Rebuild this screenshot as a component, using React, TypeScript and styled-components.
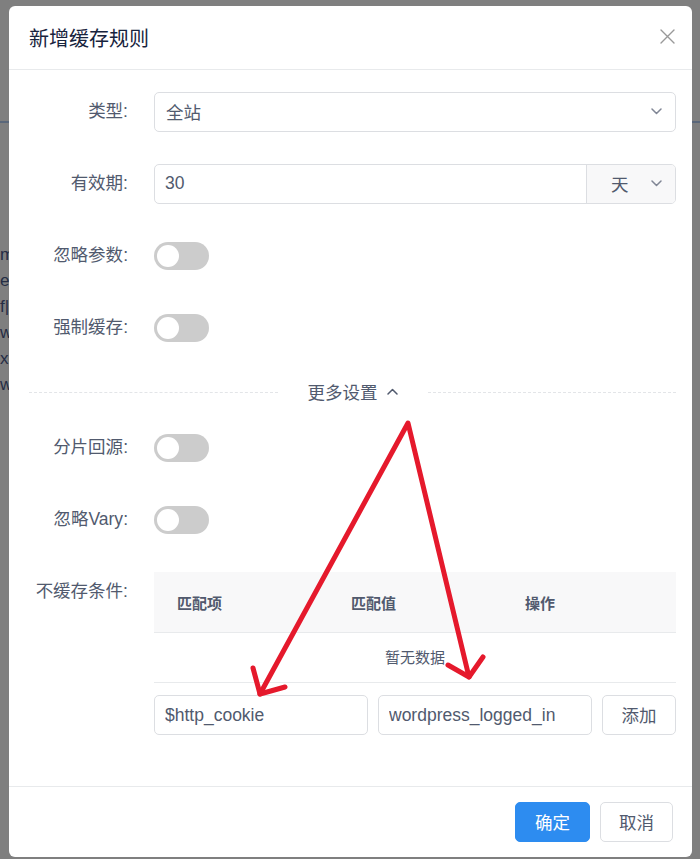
import React from 'react';
import styled, { createGlobalStyle } from 'styled-components';

const GlobalStyle = createGlobalStyle`
  html, body {
    margin: 0;
    padding: 0;
  }
  body {
    font-family: "Liberation Sans", "Noto Sans CJK SC", sans-serif;
    background: #fff;
  }
  * {
    box-sizing: border-box;
  }
`;

const Stage = styled.div`
  position: relative;
  width: 700px;
  height: 859px;
  overflow: hidden;
`;

/* page behind the dialog, only its left edge shows */
const Page = styled.div`
  padding-top: 121px;
`;

const PageRule = styled.div`
  height: 2px;
  background: #b5cff5;
`;

const PageList = styled.ul`
  list-style: none;
  width: 9px;
  overflow: hidden;
  margin: 119px 0 0;
  padding: 0;
`;

const PageItem = styled.li`
  font-size: 17px;
  line-height: 26px;
  color: #4a5a8a;
  white-space: nowrap;
`;

const Mask = styled.div`
  position: absolute;
  inset: 0;
  background: rgba(0, 0, 0, 0.5);
`;

const DialogLayer = styled.div`
  position: absolute;
  inset: 0;
  padding: 6px 8px 2px 9px;
  display: flex;
`;

const Modal = styled.div`
  width: 683px;
  height: 851px;
  background: #fff;
  border-radius: 6px;
  display: flex;
  flex-direction: column;
`;

const Header = styled.div`
  height: 64px;
  flex-shrink: 0;
  padding: 0 17px 0 20px;
  display: flex;
  align-items: center;
  justify-content: space-between;
  border-bottom: 1px solid #e8eaec;
`;

const Title = styled.div`
  font-size: 20px;
  color: #17233d;
`;

const CloseButton = styled.div`
  width: 15px;
  height: 15px;
  display: flex;
  margin-top: -2px;
`;

const Body = styled.div`
  flex: 1;
  padding: 22px 16px 0 20px;
`;

const FormItem = styled.div`
  display: flex;
  align-items: flex-start;
  margin-bottom: 32px;
`;

const Label = styled.div`
  width: 125px;
  flex-shrink: 0;
  padding-right: 26px;
  text-align: right;
  font-size: 17.5px;
  line-height: 38px;
  padding-bottom: 2px;
  color: #515a6e;
`;

const Control = styled.div<{ $inline?: boolean }>`
  flex: 1;
  min-width: 0;
  min-height: 40px;
  display: ${(p) => (p.$inline ? 'flex' : 'block')};
  align-items: center;
`;

const Select = styled.div`
  height: 40px;
  border: 1px solid #dcdee2;
  border-radius: 5px;
  padding: 0 13px 2px 11px;
  display: flex;
  align-items: center;
  justify-content: space-between;
  font-size: 17.5px;
  color: #515a6e;
`;

const InputGroup = styled.div`
  height: 40px;
  border: 1px solid #dcdee2;
  border-radius: 5px;
  display: flex;
  overflow: hidden;
`;

const GroupValue = styled.div`
  flex: 1;
  padding: 0 10px 1px;
  display: flex;
  align-items: center;
  font-size: 17.5px;
  color: #515a6e;
`;

const GroupSuffix = styled.div`
  width: 89px;
  background: #f8f8f9;
  border-left: 1px solid #dcdee2;
  padding: 0 13px 2px 24px;
  display: flex;
  align-items: center;
  justify-content: space-between;
  font-size: 17.5px;
  color: #515a6e;
`;

const Switch = styled.div<{ $on?: boolean }>`
  width: 55px;
  height: 28px;
  border-radius: 14px;
  background: ${(p) => (p.$on ? '#2d8cf0' : '#ccc')};
  padding: 0 3px;
  display: flex;
  align-items: center;
  justify-content: ${(p) => (p.$on ? 'flex-end' : 'flex-start')};
`;

const Knob = styled.div`
  width: 22px;
  height: 22px;
  border-radius: 50%;
  background: #fff;
`;

const Divider = styled.div`
  height: 24px;
  margin: 0 0 24px;
  display: flex;
  align-items: center;
`;

const DividerLine = styled.div`
  flex: 1;
  border-top: 1px dashed #e3e5e8;
`;

const DividerText = styled.div`
  padding: 0 30px 2px;
  display: flex;
  align-items: center;
  gap: 9px;
  font-size: 17.5px;
  color: #515a6e;
`;

const Table = styled.div`
  display: grid;
  grid-template-columns: repeat(3, 1fr);
`;

const HeadCell = styled.div`
  height: 61px;
  padding-left: 23px;
  display: flex;
  align-items: center;
  background: #f8f8f9;
  border-bottom: 1px solid #e8eaec;
  font-size: 15px;
  font-weight: bold;
  color: #515a6e;
`;

const EmptyRow = styled.div`
  grid-column: 1 / -1;
  height: 50px;
  padding-bottom: 2px;
  display: flex;
  align-items: center;
  justify-content: center;
  border-bottom: 1px solid #e8eaec;
  font-size: 15px;
  color: #515a6e;
`;

const AddRow = styled.div`
  margin-top: 12px;
  display: flex;
  gap: 10px;
`;

const TextInput = styled.input`
  width: 214px;
  height: 40px;
  border: 1px solid #dcdee2;
  border-radius: 5px;
  padding: 0 10px;
  font: inherit;
  font-size: 17.5px;
  color: #515a6e;
  background: #fff;
  outline: none;
`;

const Button = styled.button<{ $primary?: boolean; $width?: number }>`
  width: ${(p) => p.$width ?? 74}px;
  height: 40px;
  border-radius: 5px;
  border: 1px solid ${(p) => (p.$primary ? '#2d8cf0' : '#dcdee2')};
  background: ${(p) => (p.$primary ? '#2d8cf0' : '#fff')};
  color: ${(p) => (p.$primary ? '#fff' : '#515a6e')};
  font: inherit;
  font-size: 17.5px;
  padding: 0 0 2px;
  cursor: pointer;
`;

const Footer = styled.div`
  flex-shrink: 0;
  border-top: 1px solid #e8eaec;
  padding: 15px 19px;
  display: flex;
  justify-content: flex-end;
  gap: 10px;
`;

const Annotation = styled.svg`
  position: absolute;
  left: 0;
  top: 0;
  pointer-events: none;
`;

const ChevronDown = () => (
  <svg width="11" height="7" viewBox="0 0 11 7">
    <path d="M1 1 L5.5 5.5 L10 1" fill="none" stroke="#808695" strokeWidth="1.5" strokeLinecap="round" strokeLinejoin="round" />
  </svg>
);

const ChevronUp = () => (
  <svg width="11" height="7" viewBox="0 0 11 7">
    <path d="M1 6 L5.5 1.5 L10 6" fill="none" stroke="#515a6e" strokeWidth="1.5" strokeLinecap="round" strokeLinejoin="round" />
  </svg>
);

const CloseIcon = () => (
  <svg width="15" height="15" viewBox="0 0 15 15">
    <path d="M1 1 L14 14 M14 1 L1 14" stroke="#999" strokeWidth="1.4" strokeLinecap="round" />
  </svg>
);

const ToggleItem: React.FC<{ label: string }> = ({ label }) => (
  <FormItem>
    <Label>{label}:</Label>
    <Control $inline>
      <Switch>
        <Knob />
      </Switch>
    </Control>
  </FormItem>
);

const App: React.FC = () => {
  return (
    <Stage>
      <GlobalStyle />
      <Page>
        <PageRule />
        <PageList>
          <PageItem>m</PageItem>
          <PageItem>e</PageItem>
          <PageItem>f|</PageItem>
          <PageItem>w</PageItem>
          <PageItem>x</PageItem>
          <PageItem>w</PageItem>
        </PageList>
      </Page>
      <Mask />
      <DialogLayer>
        <Modal>
          <Header>
            <Title>新增缓存规则</Title>
            <CloseButton>
              <CloseIcon />
            </CloseButton>
          </Header>
          <Body>
            <FormItem>
              <Label>类型:</Label>
              <Control>
                <Select>
                  <span>全站</span>
                  <ChevronDown />
                </Select>
              </Control>
            </FormItem>
            <FormItem>
              <Label>有效期:</Label>
              <Control>
                <InputGroup>
                  <GroupValue>30</GroupValue>
                  <GroupSuffix>
                    <span>天</span>
                    <ChevronDown />
                  </GroupSuffix>
                </InputGroup>
              </Control>
            </FormItem>
            <ToggleItem label="忽略参数" />
            <ToggleItem label="强制缓存" />
            <Divider>
              <DividerLine />
              <DividerText>
                更多设置
                <ChevronUp />
              </DividerText>
              <DividerLine />
            </Divider>
            <ToggleItem label="分片回源" />
            <ToggleItem label="忽略Vary" />
            <FormItem>
              <Label>不缓存条件:</Label>
              <Control>
                <Table>
                  <HeadCell>匹配项</HeadCell>
                  <HeadCell>匹配值</HeadCell>
                  <HeadCell>操作</HeadCell>
                  <EmptyRow>暂无数据</EmptyRow>
                </Table>
                <AddRow>
                  <TextInput readOnly defaultValue="$http_cookie" />
                  <TextInput readOnly defaultValue="wordpress_logged_in" />
                  <Button>添加</Button>
                </AddRow>
              </Control>
            </FormItem>
          </Body>
          <Footer>
            <Button $primary $width={75}>确定</Button>
            <Button $width={73}>取消</Button>
          </Footer>
        </Modal>
      </DialogLayer>
      <Annotation width="700" height="859" viewBox="0 0 700 859">
        <g fill="none" stroke="#e5192c" strokeWidth="5" strokeLinecap="round" strokeLinejoin="round">
          <path d="M260 694 L408 423 L469 677" />
          <path d="M253 668 L260 694 L285 687" />
          <path d="M448 665 L469 677 L483 657" />
        </g>
      </Annotation>
    </Stage>
  );
};

export default App;
